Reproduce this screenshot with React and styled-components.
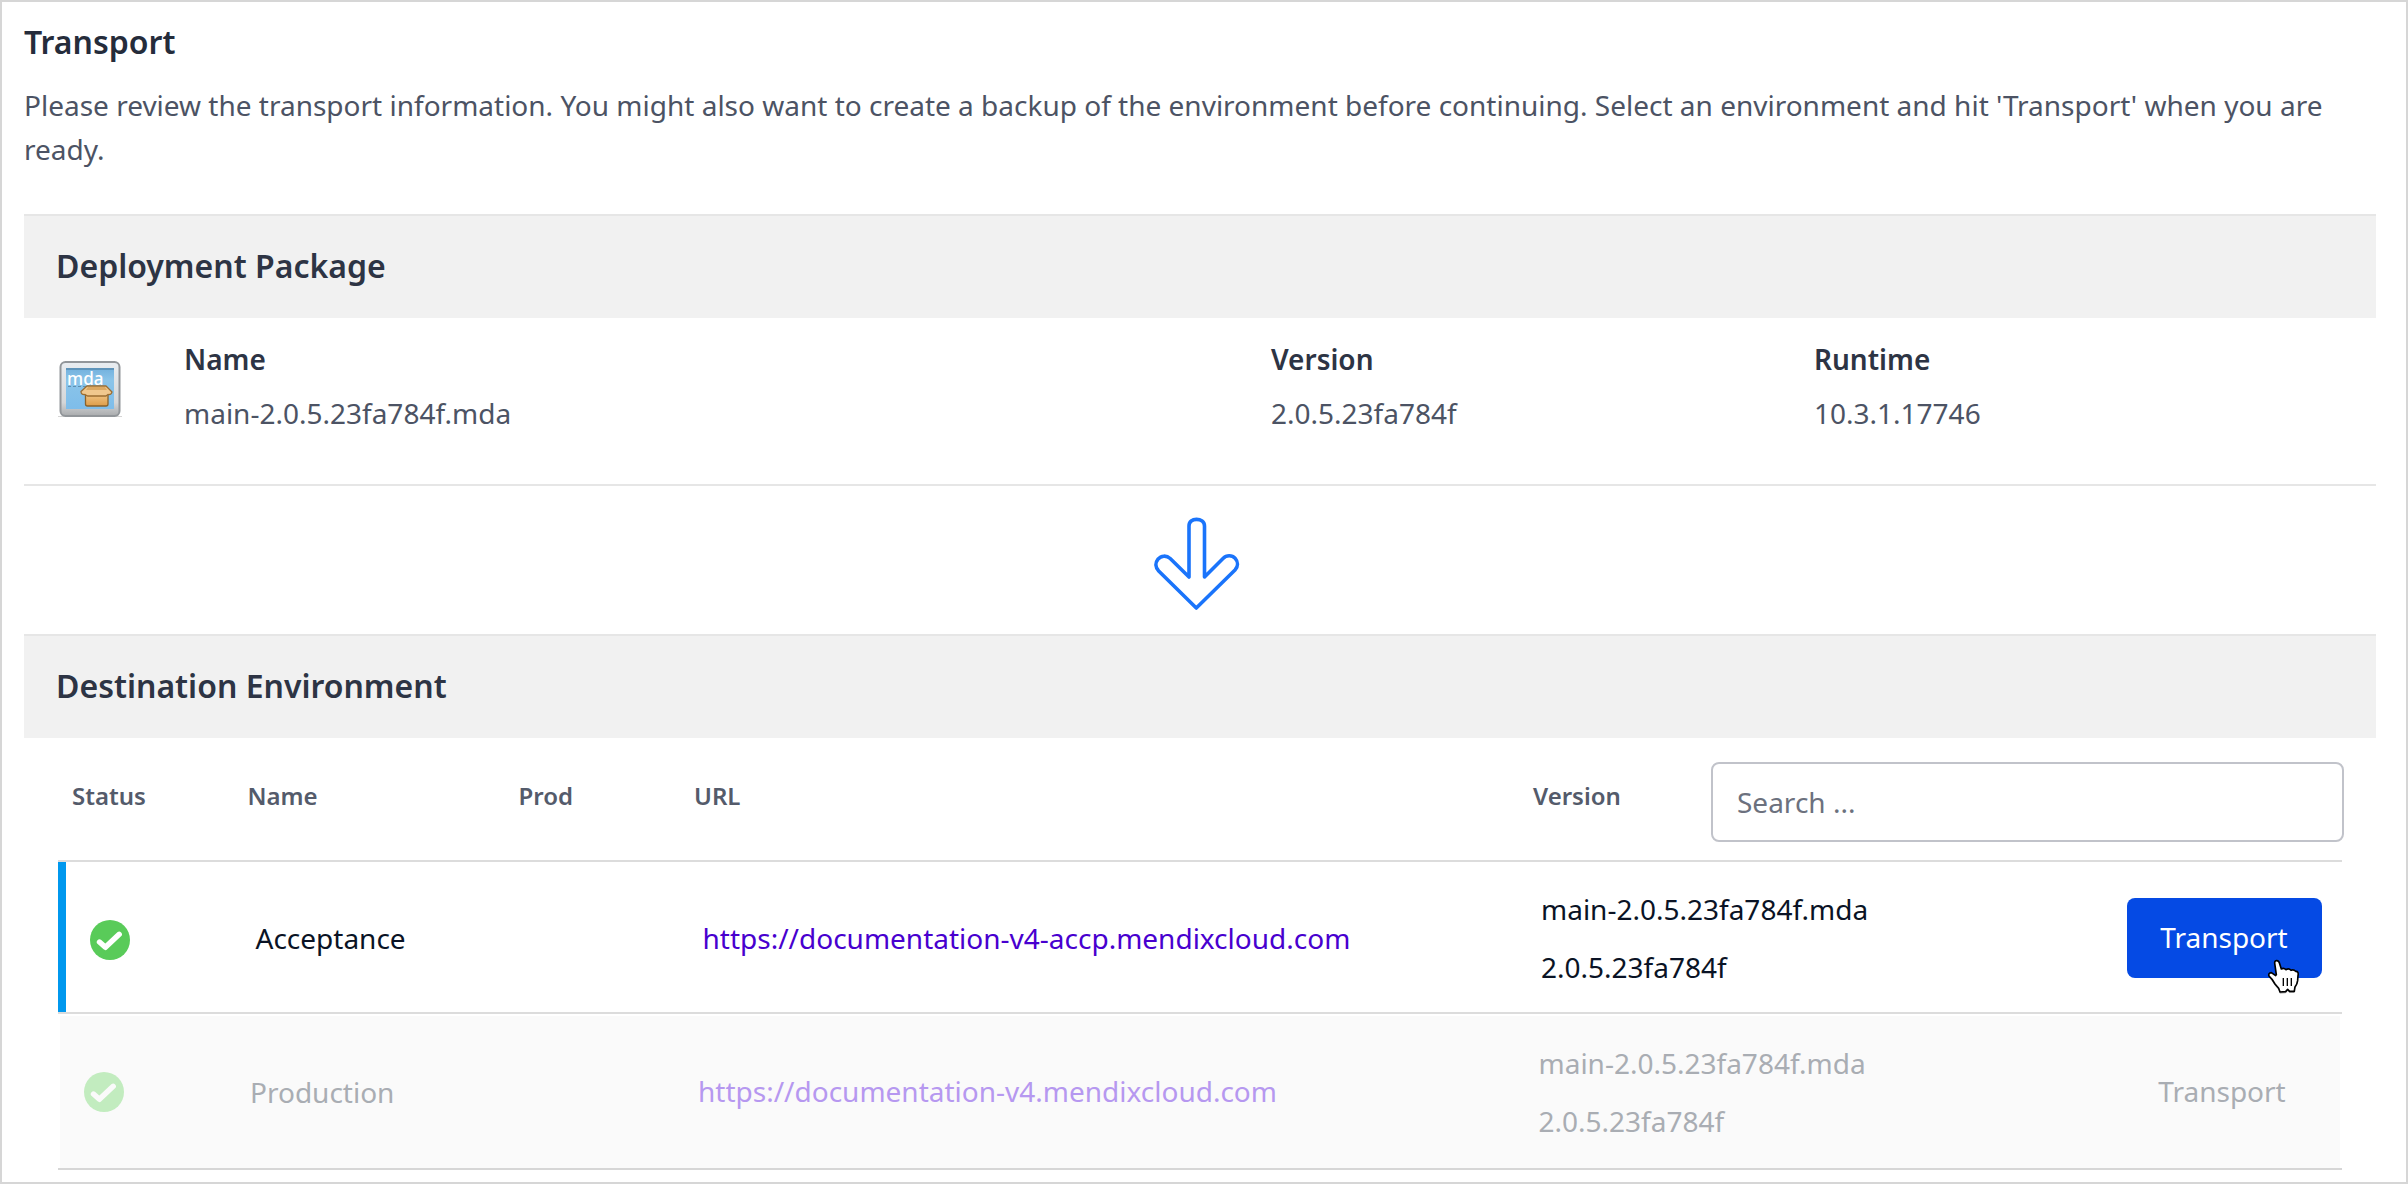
import React from 'react';
import styled, { createGlobalStyle } from 'styled-components';

const GlobalStyle = createGlobalStyle`
  *, *::before, *::after { box-sizing: border-box; }
  body { margin: 0; background: #fff; font-family: "Noto Sans", sans-serif; }
`;

const Page = styled.main`
  width: 2408px;
  height: 1184px;
  padding: 18px 30px 0 22px;
  border: 2px solid #d6d6d6;
  background: #fff;
  overflow: hidden;
  display: flex;
  flex-direction: column;
  font-size: 28px;
  line-height: 44px;
  color: #4c5364;
`;

const Title = styled.h1`
  margin: 0;
  font-size: 32px;
  line-height: 44px;
  font-weight: 600;
  color: #252c3b;
`;

const Intro = styled.p`
  margin: 19px 0 43px;
`;

const Band = styled.header`
  height: 104px;
  flex: none;
  display: flex;
  align-items: center;
  padding: 0 32px 2px;
  border-top: 2px solid #e6e6e6;
  background: #f1f1f1;
`;

const BandTitle = styled.h2`
  margin: 0;
  font-size: 32px;
  line-height: 44px;
  font-weight: 600;
  color: #2d3444;
`;

const PackageBody = styled.div`
  height: 168px;
  flex: none;
  display: grid;
  grid-template-columns: 126px 1087px 543px 1fr;
  padding: 19px 0 0 34px;
  border-bottom: 2px solid #e6e6e6;
`;

const IconCell = styled.div`
  padding-top: 23px;
  svg { display: block; }
`;

const Label = styled.div`
  height: 54px;
  font-weight: 600;
  color: #2d3444;
`;

const ArrowArea = styled.div`
  height: 148px;
  flex: none;
  display: flex;
  justify-content: center;
  padding: 31px 7px 0 0;
`;

const Table = styled.section`
  width: 2286px;
  margin-left: 34px;
  display: flex;
  flex-direction: column;
`;

const HeadRow = styled.div`
  height: 122px;
  display: grid;
  grid-template-columns: 175.5px 271px 175.5px 839px 178px 633px;
  padding-left: 14px;
`;

const HeadCell = styled.div`
  padding-top: 36px;
  font-size: 24px;
  font-weight: 600;
  color: #545b6b;
`;

const Search = styled.input`
  width: 633px;
  height: 80px;
  margin: 24px 0 0;
  padding: 0 24px;
  border: 2px solid #c1c3ca;
  border-radius: 8px;
  outline: none;
  background: #fff;
  font-family: inherit;
  font-size: 28px;
  color: #252c3b;
  &::placeholder { color: #6c717e; opacity: 1; }
`;

const Frame = styled.div`
  width: 2284px;
  border-top: 2px solid #dcdcdc;
  padding: ${(p) => (p.$muted ? '2px 2px 0' : '0')};
`;

const EndRule = styled.div`
  width: 2284px;
  height: 2px;
  background: #d6d6d6;
`;

const Row = styled.div`
  height: ${(p) => (p.$muted ? 152 : 150)}px;
  display: grid;
  grid-template-columns: ${(p) => (p.$muted ? '166px 448px 840.5px 1fr' : '165.5px 447px 838.5px 1fr')};
  align-items: center;
  padding: 0 20px 0 24px;
  border-left: ${(p) => (p.$muted ? '0' : '8px solid #0098ee')};
  background: ${(p) => (p.$muted ? '#fafafa' : '#fff')};
  color: ${(p) => (p.$muted ? '#a9adb3' : '#0a1325')};
`;

const StatusCell = styled.div`
  padding-top: ${(p) => (p.$muted ? 0 : 6)}px;
  svg { display: block; }
`;

const NameCell = styled.div`
  padding-top: ${(p) => (p.$muted ? 0 : 2)}px;
`;

const Link = styled.a`
  padding: ${(p) => (p.$muted ? '0 0 2px' : '2px 0 0')};
  color: ${(p) => (p.$muted ? '#b698f0' : '#4800cf')};
  text-decoration: none;
`;

const VersionCell = styled.div`
  display: flex;
  justify-content: space-between;
  align-items: center;
`;

const VersionLines = styled.div`
  line-height: 58px;
  padding: ${(p) => (p.$muted ? '0 0 1px' : '1px 0 0')};
`;

const Action = styled.button`
  position: relative;
  width: ${(p) => (p.$muted ? 194 : 195)}px;
  height: 80px;
  margin: ${(p) => (p.$muted ? '0 1px 1px 0' : '2px 0 0')};
  padding: ${(p) => (p.$muted ? '0 0 1px' : '0 1px 3px 0')};
  border: 0;
  border-radius: 8px;
  background: ${(p) => (p.$muted ? 'transparent' : '#054ae4')};
  color: ${(p) => (p.$muted ? '#a9adb3' : '#fff')};
  font-family: inherit;
  font-size: 28px;
  font-weight: ${(p) => (p.$muted ? 400 : 450)};
  line-height: 44px;
`;

const Pointer = styled.svg`
  position: absolute;
  left: 139.7px;
  top: 60px;
  overflow: visible;
`;

const MdaIcon = () => (
  <svg width="64" height="58" viewBox="0 0 64 58">
    <defs>
      <linearGradient id="frame" x1="0" y1="0" x2="0" y2="1">
        <stop offset="0" stopColor="#e9edf1" />
        <stop offset="0.75" stopColor="#d4d6d8" />
        <stop offset="1" stopColor="#a9abad" />
      </linearGradient>
      <linearGradient id="screen" x1="0" y1="0" x2="0" y2="1">
        <stop offset="0" stopColor="#72b0dd" />
        <stop offset="0.3" stopColor="#8ac4e9" />
        <stop offset="1" stopColor="#7ebdea" />
      </linearGradient>
      <linearGradient id="box" x1="0" y1="0" x2="0" y2="1">
        <stop offset="0" stopColor="#f2c98c" />
        <stop offset="1" stopColor="#dd9d49" />
      </linearGradient>
    </defs>
    <path d="M0 56H64V57H0Z" fill="#d4d4d4" />
    <rect x="2.5" y="2" width="59" height="54" rx="5" fill="url(#frame)" stroke="#92969a" strokeWidth="2" />
    <rect x="8" y="8" width="48" height="41" fill="url(#screen)" />
    <path d="M8 9H56" stroke="#5e94ba" strokeWidth="2" />
    <path d="M10 26.5H41" stroke="#527f9f" strokeWidth="1.2" strokeDasharray="3 2" opacity="0.75" />
    <text x="9" y="25.3" fontFamily="Noto Sans, sans-serif" fontSize="18.5" fontWeight="500" fill="#fff" textLength="36.5" lengthAdjust="spacingAndGlyphs">mda</text>
    <path d="M27.5 33H50V44Q50 46 48 46H29.5Q27.5 46 27.5 44Z" fill="url(#box)" stroke="#8b6228" strokeWidth="1.3" />
    <path d="M29 26H48L54 32Q53.5 35 50 34.5L48 36H29.5L27 34.5Q23 35 23 31.5Z" fill="#f0c88e" stroke="#9a6d32" strokeWidth="1.3" strokeLinejoin="round" />
    <path d="M30 27H47L49 30H28Z" fill="#dba964" />
  </svg>
);

const DownArrow = () => (
  <svg width="86" height="94" viewBox="0 0 86 94" fill="none" stroke="#1a74fb" strokeWidth="3.6" strokeLinejoin="round" strokeLinecap="round">
    <path d="M35 60V9C35 4.5 38.4 2.4 42.5 2.4S50.5 4.5 50.5 9V60L69 41.4C72.5 37.8 78 37.8 81.2 41.4C84.2 44.7 84.2 49.5 81 53L42.3 91L4.7 54C1.3 50.5 1 46 4 42.2C7 38.4 12.5 38.2 16.2 41.5Z" />
  </svg>
);

const Check = ({ muted }) => (
  <svg width="40" height="40" viewBox="0 0 40 40">
    <circle cx="20" cy="20" r="20" fill={muted ? '#c2ecbf' : '#59cb59'} />
    <path d="M9.5 22L15.4 27.3L29.2 14.3" fill="none" stroke={muted ? '#fafafa' : '#fff'} strokeWidth="5.4" strokeLinecap="round" strokeLinejoin="round" />
  </svg>
);

const HandPointer = () => (
  <Pointer width="33.3" height="37.3" viewBox="80 84 100 112">
    <g strokeLinejoin="round">
      <path transform="translate(0 5)" opacity="0.3" d="M119 186L115 175L104 162L95 148L86 138Q83 129 93 128L106 137L108 134L103 99Q103 91 110 92Q115 93 117 98L123 117Q130 112 137 119Q146 114 152 121Q160 117 166 124Q176 123 173 138L172 152Q171 162 164 171L162 184H148L142 178L136 185Z" />
      <path fill="#fff" stroke="#000" strokeWidth="5" d="M119 186L115 175L104 162L95 148L86 138Q83 129 93 128L106 137L108 134L103 99Q103 91 110 92Q115 93 117 98L123 117Q130 112 137 119Q146 114 152 121Q160 117 166 124Q176 123 173 138L172 152Q171 162 164 171L162 184H148L142 178L136 185Z" />
      <path stroke="#000" strokeWidth="4" d="M129 144V168M141 144V168M153 144V168" />
    </g>
  </Pointer>
);

const environments = [
  { name: 'Acceptance', url: 'https://documentation-v4-accp.mendixcloud.com', muted: false },
  { name: 'Production', url: 'https://documentation-v4.mendixcloud.com', muted: true },
];

export default function App() {
  return (
    <>
      <GlobalStyle />
      <Page>
        <Title>Transport</Title>
        <Intro>
          Please review the transport information. You might also want to create a backup of the environment
          before continuing. Select an environment and hit 'Transport' when you are ready.
        </Intro>

        <Band><BandTitle>Deployment Package</BandTitle></Band>
        <PackageBody>
          <IconCell><MdaIcon /></IconCell>
          <div><Label>Name</Label>main-2.0.5.23fa784f.mda</div>
          <div><Label>Version</Label>2.0.5.23fa784f</div>
          <div><Label>Runtime</Label>10.3.1.17746</div>
        </PackageBody>

        <ArrowArea><DownArrow /></ArrowArea>

        <Band><BandTitle>Destination Environment</BandTitle></Band>
        <Table>
          <HeadRow>
            <HeadCell>Status</HeadCell>
            <HeadCell>Name</HeadCell>
            <HeadCell>Prod</HeadCell>
            <HeadCell>URL</HeadCell>
            <HeadCell>Version</HeadCell>
            <Search placeholder="Search ..." />
          </HeadRow>
          {environments.map(({ name, url, muted }) => (
            <Frame key={name} $muted={muted}>
              <Row $muted={muted}>
                <StatusCell $muted={muted}><Check muted={muted} /></StatusCell>
                <NameCell $muted={muted}>{name}</NameCell>
                <Link $muted={muted}>{url}</Link>
                <VersionCell>
                  <VersionLines $muted={muted}>
                    <div>main-2.0.5.23fa784f.mda</div>
                    <div>2.0.5.23fa784f</div>
                  </VersionLines>
                  <Action $muted={muted}>
                    Transport
                    {!muted && <HandPointer />}
                  </Action>
                </VersionCell>
              </Row>
            </Frame>
          ))}
          <EndRule />
        </Table>
      </Page>
    </>
  );
}
